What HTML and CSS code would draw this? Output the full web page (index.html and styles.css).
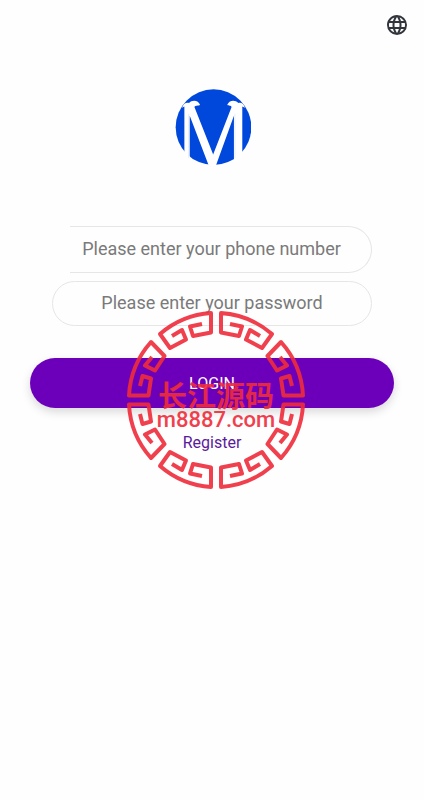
FILE: index.html
```
<!DOCTYPE html>
<html lang="en">
<head>
    <meta charset="UTF-8">
    <meta name="viewport" content="width=device-width, initial-scale=1">
    <title>Login</title>
    <link rel="stylesheet" href="styles.css">
</head>
<body>
    <header class="topbar">
        <button type="button" class="btn-lang" aria-label="Language">
            <svg viewBox="0 0 24 24" width="24" height="24">
                <path d="M16.36 14c.08-.66.14-1.32.14-2s-.06-1.34-.14-2h3.38c.16.64.26 1.31.26 2s-.1 1.36-.26 2m-5.15 5.56c.6-1.11 1.06-2.31 1.38-3.56h2.95a8.03 8.03 0 0 1-4.33 3.56M14.34 14H9.66c-.1-.66-.16-1.32-.16-2s.06-1.35.16-2h4.68c.09.65.16 1.32.16 2s-.07 1.34-.16 2M12 19.96c-.83-1.2-1.5-2.53-1.91-3.96h3.82c-.41 1.43-1.08 2.76-1.91 3.96M8 8H5.08A7.92 7.92 0 0 1 9.4 4.44C8.8 5.55 8.35 6.75 8 8m-2.92 8H8c.35 1.25.8 2.45 1.4 3.56A8 8 0 0 1 5.08 16m-.82-2C4.1 13.36 4 12.69 4 12s.1-1.36.26-2h3.38c-.08.66-.14 1.32-.14 2s.06 1.34.14 2M12 4.03c.83 1.2 1.5 2.54 1.91 3.97h-3.82c.41-1.43 1.08-2.77 1.91-3.97M18.92 8h-2.95a15.7 15.7 0 0 0-1.38-3.56c1.84.63 3.37 1.9 4.33 3.56M12 2C6.47 2 2 6.5 2 12a10 10 0 0 0 10 10 10 10 0 0 0 10-10A10 10 0 0 0 12 2"/>
            </svg>
        </button>
    </header>

    <main class="login">
        <svg class="logo" viewBox="72 42 230 230" role="img" aria-label="Logo">
            <circle cx="190" cy="156" r="113" fill="#0048dc"/>
            <path fill="#fff" d="M96 98C99 87 108 81 117 84C125 74 145 74 150 90C144 94 137 89 133 96L189 238L244 96C241 89 237 94 231 90C236 74 256 74 264 84C272 81 281 87 284 98L276 94V248L267 252L251 262V122L197 271H176L119 122V262L103 250V94Z"/>
            <path fill="none" stroke="#a9c4f5" d="M116 116V248M254 116V248"/>
        </svg>

        <form class="login-form">
            <div class="phone-row">
                <input type="tel" class="field field-phone" placeholder="Please enter your phone number" aria-label="Phone number">
            </div>
            <input type="password" class="field field-password" placeholder="Please enter your password" aria-label="Password">
            <button type="button" class="btn-login">LOGIN</button>
        </form>
        <a href="#register" class="register">Register</a>
    </main>

    <div class="stamp">
        <svg class="stamp-ring" viewBox="-90 -90 180 180" aria-hidden="true">
            <defs>
                <g id="quarter">
                    <path d="M14 -76L26 -73.500L23 -64L5 -67.500V-87A87 87 0 0 1 56 -66L46 -52L30 -60.500L34 -70L44 -64"/>
                    <path d="M64 -43L71 -34.500L61 -29.500L51.500 -44L65 -58A87 87 0 0 1 87 -4.500H67.500L65 -21.500L73.500 -24L76 -14"/>
                </g>
            </defs>
            <use href="#quarter"/>
            <use href="#quarter" transform="scale(-1 1)"/>
            <use href="#quarter" transform="scale(1 -1)"/>
            <use href="#quarter" transform="scale(-1 -1)"/>
        </svg>
        <div class="stamp-text">
            <span class="stamp-name" lang="zh-CN">长江源码</span>
            <span class="stamp-site">m8887.com</span>
        </div>
    </div>
</body>
</html>
```
FILE: styles.css
```
:root {
    --purple: #6c00ba;
    --link: #5b1a9b;
    --border: #e6e6e6;
    --placeholder: #7a7a7a;
    --red: #f02c3a;
}

* {
    box-sizing: border-box;
}

body {
    position: relative;
    margin: 0;
    min-height: 100vh;
    background-color: #fefefe;
    font-family: Roboto, "Noto Sans CJK SC", sans-serif;
}

.topbar {
    display: flex;
    justify-content: flex-end;
    padding: 13px 15px 0;
}

.btn-lang {
    display: flex;
    padding: 0;
    border: none;
    background: none;
    fill: #32363c;
    cursor: pointer;
}

.login {
    display: flex;
    flex-direction: column;
    align-items: center;
    padding: 52px 30px 0;
}

.logo {
    width: 77px;
    height: 77px;
}

.login-form {
    display: flex;
    flex-direction: column;
    align-items: center;
    width: 100%;
    margin-top: 60px;
}

.field {
    width: 88%;
    height: 45px;
    padding: 0 20px 2px;
    border: 1px solid var(--border);
    border-radius: 24px;
    background: transparent;
    font-family: inherit;
    font-size: 18px;
    text-align: center;
    outline: none;
}

.field::placeholder {
    color: var(--placeholder);
    opacity: 1;
}

.phone-row {
    width: 88%;
    padding-left: 18px;
}

.field-phone {
    display: block;
    width: 100%;
    height: 47px;
    padding: 0 18px 2px 0;
    border-left: none;
    border-radius: 0 24px 24px 0;
}

.field-password {
    margin-top: 8px;
}

.btn-login {
    width: 100%;
    height: 50px;
    margin-top: 32px;
    border: none;
    border-radius: 25px;
    background-color: var(--purple);
    color: #fff;
    font-family: inherit;
    font-size: 16px;
    box-shadow: 0 4px 10px rgba(0, 0, 0, 0.15);
    cursor: pointer;
}

.register {
    margin-top: 25px;
    color: var(--link);
    font-size: 16px;
    line-height: 20px;
    text-decoration: none;
}

/* red seal, lies over the form */
.stamp {
    position: absolute;
    top: 310px;
    left: calc(50% - 86px);
    width: 180px;
    height: 180px;
    opacity: 0.9;
    color: var(--red);
    pointer-events: none;
}

.stamp-ring {
    display: block;
    width: 100%;
    fill: none;
    stroke: var(--red);
    stroke-width: 4;
    stroke-linejoin: round;
}

.stamp-text {
    position: absolute;
    top: 70px;
    left: 0;
    width: 100%;
    text-align: center;
}

.stamp-name,
.stamp-site {
    display: block;
    white-space: nowrap;
}

.stamp-name {
    font-family: "Noto Sans CJK SC", sans-serif;
    font-size: 29px;
    font-weight: 700;
    line-height: 28px;
}

.stamp-site {
    font-size: 22px;
    font-weight: 500;
    line-height: 24px;
}
```
